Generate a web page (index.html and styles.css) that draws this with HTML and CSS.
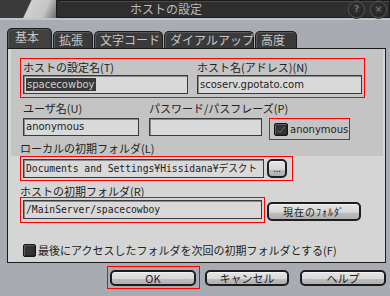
FILE: index.html
```html
<!DOCTYPE html>
<html lang="ja">
<head>
    <meta charset="UTF-8">
    <title>ホストの設定</title>
    <link rel="stylesheet" href="styles.css">
</head>
<body>
    <div class="titlebar">
        <div class="title-corner"></div>
        <div class="title-box">
            <span class="title-text">ホストの設定</span>
            <span class="title-btn">?</span>
            <span class="title-btn">×</span>
        </div>
    </div>
    <div class="title-line"></div>

    <div class="tabs">
        <div class="tab active t1">基本</div>
        <div class="tab t2">拡張</div>
        <div class="tab t3">文字コード</div>
        <div class="tab t4">ダイアルアップ</div>
        <div class="tab t5">高度</div>
    </div>

    <div class="panel">
        <div class="upper">
            <div class="mark host-row">
                <div class="field wide">
                    <label>ホストの設定名(T)</label>
                    <div class="input tall"><span class="selected">spacecowboy</span></div>
                </div>
                <div class="field wide">
                    <label>ホスト名(アドレス)(N)</label>
                    <div class="input tall">scoserv.gpotato.com</div>
                </div>
            </div>

            <div class="user-row">
                <div class="field user">
                    <label>ユーザ名(U)</label>
                    <div class="input">anonymous</div>
                </div>
                <div class="field pass">
                    <label>パスワード/パスフレーズ(P)</label>
                    <div class="input"></div>
                </div>
                <div class="mark anon">
                    <span class="check checked"></span>
                    <span>anonymous</span>
                </div>
            </div>

            <label class="local-label">ローカルの初期フォルダ(L)</label>
        </div>

        <div class="lower">
            <div class="mark local-row">
                <div class="input mono local-input">Documents and Settings¥Hissidana¥デスクト</div>
                <button class="btn dots">...</button>
            </div>

            <label class="host-label">ホストの初期フォルダ(R)</label>
            <div class="folder-row">
                <div class="mark folder-box">
                    <div class="input mono folder-input">/MainServer/spacecowboy</div>
                </div>
                <button class="btn current">現在のﾌｫﾙﾀﾞ</button>
            </div>

            <div class="check-row">
                <span class="check"></span>
                <span>最後にアクセスしたフォルダを次回の初期フォルダとする(F)</span>
            </div>
        </div>
    </div>

    <div class="footer">
        <div class="mark ok-box"><button class="btn ok">OK</button></div>
        <button class="btn cancel">キャンセル</button>
        <button class="btn help">ヘルプ</button>
    </div>
</body>
</html>
```

FILE: styles.css
```css
body { margin: 0; width: 390px; height: 296px; overflow: hidden; background: #a8abb2; font-family: "Noto Sans CJK JP", sans-serif; font-size: 11px; color: #222; }

/* title bar */
.titlebar { display: flex; height: 18px; background: #262626; }
.title-corner { width: 56px; background: linear-gradient(115deg, #3a3a3a 48%, #d0d0d0 50%, #c4c4c4 78%, #6a6a6a 100%); }
.title-box { flex: 1; display: flex; align-items: center; background: #2e2e2e; border: 1px solid #1a1a1a; border-radius: 5px 0 0 5px; box-shadow: inset 0 1px 0 #4a4a4a; padding-left: 73px; padding-right: 2px; }
.title-text { flex: 1; color: #bdbdbd; font-size: 12px; line-height: 16px; }
.title-btn { width: 15px; height: 15px; margin-left: 5px; border-radius: 50%; border: 1px solid #555; background: radial-gradient(circle at 50% 40%, #363636, #1e1e1e); color: #6e6e6e; font: bold 9px "DejaVu Sans", sans-serif; line-height: 15px; text-align: center; box-shadow: 0 0 0 1px #333; }
.title-line { height: 2px; background: #c2c4c9; }

/* tabs */
.tabs { display: flex; align-items: flex-end; height: 28px; padding-left: 7px; }
.tab { box-sizing: border-box; height: 17px; margin-right: 1px; padding-left: 5px; background: #3a3a3a; border: 1px solid #1c1c1c; border-bottom: none; border-radius: 5px 5px 0 0; box-shadow: inset 1px 1px 0 #5a5a5a; color: #c6c6c6; font-size: 12px; line-height: 15px; white-space: nowrap; }
.tab.active { height: 20px; padding-left: 7px; line-height: 16px; background: #404040; }
.t1 { width: 45px; }
.t2 { width: 40px; }
.t3 { width: 69px; }
.t4 { width: 90px; }
.t5 { width: 42px; }

/* panel */
.panel { box-sizing: border-box; display: flex; flex-direction: column; width: 379px; height: 215px; margin-left: 7px; background: #d5d5d5; border: 1px solid #1a1a1a; }
.upper { margin: 0 2px 0 3px; padding-left: 9px; background: #c4c4c4; }
.lower { flex: 1; padding-left: 12px; }

label { display: block; line-height: 15px; white-space: nowrap; }
.mark { box-sizing: border-box; border: 1px solid #ff0000; }

.input { box-sizing: border-box; height: 18px; padding-left: 2px; background: #d9d9d9; border: 1px solid #3a3a3a; box-shadow: inset 1px 1px 0 #8a8a8a; font: 10px "DejaVu Sans", "Noto Sans CJK JP", sans-serif; line-height: 16px; white-space: nowrap; overflow: hidden; }
.input.tall { height: 19px; line-height: 17px; }
.mono { height: 19px; padding-left: 2px; font: 9.7px "DejaVu Sans Mono", "Noto Sans CJK JP", monospace; line-height: 17px; }
.selected { background: #383838; color: #cfcfcf; padding: 1px 1px; }

.host-row { display: flex; gap: 9px; width: 345px; height: 40px; margin-top: 9px; padding: 1px 2px 3px 2px; }
.field.wide { width: 165px; }

.user-row { display: flex; align-items: flex-start; height: 42px; padding-left: 3px; }
.user-row label { margin-top: 3px; margin-bottom: 2px; }
.field.user { width: 116px; margin-right: 10px; }
.field.pass { width: 113px; margin-right: 7px; }
.anon { display: flex; align-items: center; gap: 2px; width: 81px; height: 22px; margin-top: 20px; padding-left: 4px; font: 10px "DejaVu Sans", sans-serif; }

.check { box-sizing: border-box; position: relative; width: 13px; height: 13px; background: #333; border: 1px solid #151515; border-radius: 2px; box-shadow: inset 1px 1px 0 #5c5c5c, inset -1px -1px 0 #262626; }
.check.checked { width: 14px; }
.check.checked::after { content: ""; position: absolute; left: 4px; top: 1px; width: 3px; height: 7px; border: solid #5e5e5e; border-width: 0 1px 1px 0; transform: rotate(40deg); }

.local-label { margin-top: 1px; }

.local-row { display: flex; gap: 3px; width: 273px; height: 25px; padding: 2px 5px 2px 2px; }
.local-input { width: 241px; }

.host-label { margin-top: 4px; line-height: 12px; }
.folder-row { display: flex; }
.folder-box { width: 245px; height: 26px; padding: 2px 2px 3px 2px; }
.folder-input { width: 239px; }

.check-row { display: flex; align-items: center; gap: 2px; height: 16px; margin-top: 19px; padding-left: 3px; white-space: nowrap; }

/* buttons */
.btn { box-sizing: border-box; height: 16px; padding: 0; border: 2px solid #1e1e1e; border-radius: 5px; background: linear-gradient(#e6e6e6, #d8d8d8 55%, #bdbdbd 62%, #afafaf); box-shadow: inset 0 1px 0 #f2f2f2; color: #222; font-family: "Noto Sans CJK JP", sans-serif; font-size: 11px; line-height: 12px; cursor: pointer; }
.dots { width: 20px; height: 19px; font-size: 9px; line-height: 13px; }
.current { align-self: flex-end; width: 94px; height: 19px; margin: 0 0 2px 2px; font-size: 10px; letter-spacing: 1px; line-height: 14px; }

.footer { display: flex; align-items: flex-start; margin-top: 3px; padding-left: 107px; }
.ok-box { padding: 3px 3px 2px 2px; margin-right: 5px; }
.ok { width: 86px; }
.cancel { width: 84px; margin-top: 4px; margin-right: 11px; }
.help { width: 86px; margin-top: 4px; }
```
